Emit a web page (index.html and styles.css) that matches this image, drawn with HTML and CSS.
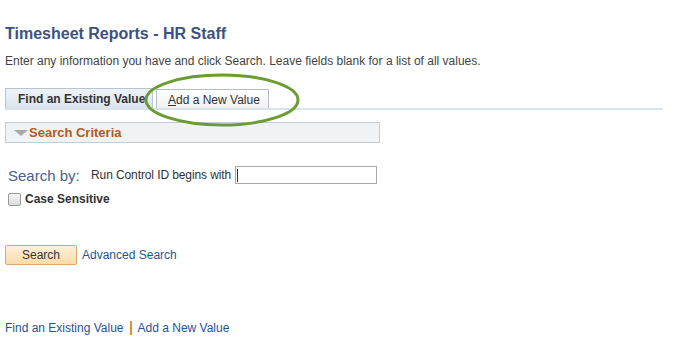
FILE: index.html
```html
<!DOCTYPE html>
<html>
<head>
<meta charset="utf-8">
<link rel="stylesheet" href="styles.css">
</head>
<body>
<div class="page">
  <h1 class="title">Timesheet Reports - HR Staff</h1>
  <p class="instr">Enter any information you have and click Search. Leave fields blank for a list of all values.</p>
  <div class="tabs">
    <div class="tab tab-active">Find an Existing Value</div>
    <div class="tab tab-other"><span class="ul">A</span>dd a New Value</div>
    <svg class="ring" width="158" height="54" viewBox="0 0 158 54"><ellipse cx="79" cy="27" rx="76" ry="25" fill="none" stroke="#6b9c32" stroke-width="3"/></svg>
  </div>
  <div class="criteria"><span class="tri"></span><span class="crit-text">Search Criteria</span></div>
  <div class="searchby">
    <span class="sb-label">Search by:</span>
    <span class="sb-field">Run Control ID begins with</span>
    <span class="inp"><span class="caret"></span></span>
  </div>
  <div class="case"><span class="cb"></span><span class="case-text">Case Sensitive</span></div>
  <div class="actions">
    <span class="btn">Search</span>
    <span class="link">Advanced Search</span>
  </div>
  <div class="foot">
    <span class="link">Find an Existing Value</span>
    <span class="sep"></span>
    <span class="link">Add a New Value</span>
  </div>
</div>
</body>
</html>
```
FILE: styles.css
```css
html, body { margin: 0; padding: 0; background: #fff; }
body { font-family: "Liberation Sans", Arial, sans-serif; color: #333; }
.page { padding: 0 5px; width: 658px; }
.title { margin: 0; padding-top: 25px; font-size: 16px; line-height: 18px; font-weight: bold; color: #3b5282; }
.instr { margin: 0; padding-top: 11px; font-size: 12px; line-height: 14px; color: #444; }
.tabs { position: relative; display: flex; align-items: flex-end; margin-top: 20px; border-bottom: 2px solid #d9e3ef; height: 20px; }
.tab { font-size: 12px; line-height: 18px; height: 18px; box-sizing: border-box; }
.tab-active { width: 148px; height: 20px; padding: 1px 0 0 12px; font-weight: bold; color: #333; background: linear-gradient(#eef3f8, #dbe5f0); border: 1px solid #b7c3d0; border-bottom: none; }
.tab-other { margin-left: 3px; width: 113px; height: 19px; padding: 1px 0 0 11px; color: #333; background: linear-gradient(#ffffff, #f1f1f1); border: 1px solid #b5bcc6; border-bottom: none; }
.ul { text-decoration: underline; }
.ring { position: absolute; left: 138px; top: -15px; }
.criteria { margin-top: 12px; width: 375px; height: 21px; box-sizing: border-box; border: 1px solid #c4ccd4; background: #eff3f5; display: flex; align-items: center; padding-left: 8px; }
.tri { width: 0; height: 0; border-left: 7px solid transparent; border-right: 7px solid transparent; border-top: 6px solid #a8a8a8; margin-right: 1px; margin-top: 1px; }
.crit-text { font-size: 13px; font-weight: bold; color: #b55a1c; }
.searchby { display: flex; align-items: center; margin-top: 23px; padding-left: 3px; height: 18px; }
.sb-label { font-size: 15px; color: #4a5f8c; width: 83px; }
.sb-field { font-size: 12px; color: #333; letter-spacing: -0.1px; }
.inp { margin-left: 4px; width: 142px; height: 18px; box-sizing: border-box; border: 1px solid #aaa; display: flex; align-items: center; padding-left: 1px; }
.caret { width: 1px; height: 13px; background: #333; }
.case { display: flex; align-items: center; margin-top: 8px; padding-left: 3px; height: 14px; }
.cb { width: 11px; height: 11px; border: 1px solid #999; border-radius: 2px; background: linear-gradient(#f5f5f5, #dcdcdc); margin-right: 4px; }
.case-text { font-size: 12px; font-weight: bold; color: #333; }
.actions { display: flex; align-items: center; margin-top: 39px; height: 20px; }
.btn { width: 72px; height: 20px; box-sizing: border-box; border: 1px solid #e0a96b; border-radius: 2px; background: linear-gradient(#fdf0dc, #fbdcaa); font-size: 12px; color: #333; text-align: center; line-height: 18px; }
.link { font-size: 12px; color: #1d5597; }
.actions .link { margin-left: 5px; }
.foot { display: flex; align-items: center; margin-top: 55px; height: 16px; }
.sep { width: 2px; height: 14px; background: #e0932f; margin: 0 6px; }
```
